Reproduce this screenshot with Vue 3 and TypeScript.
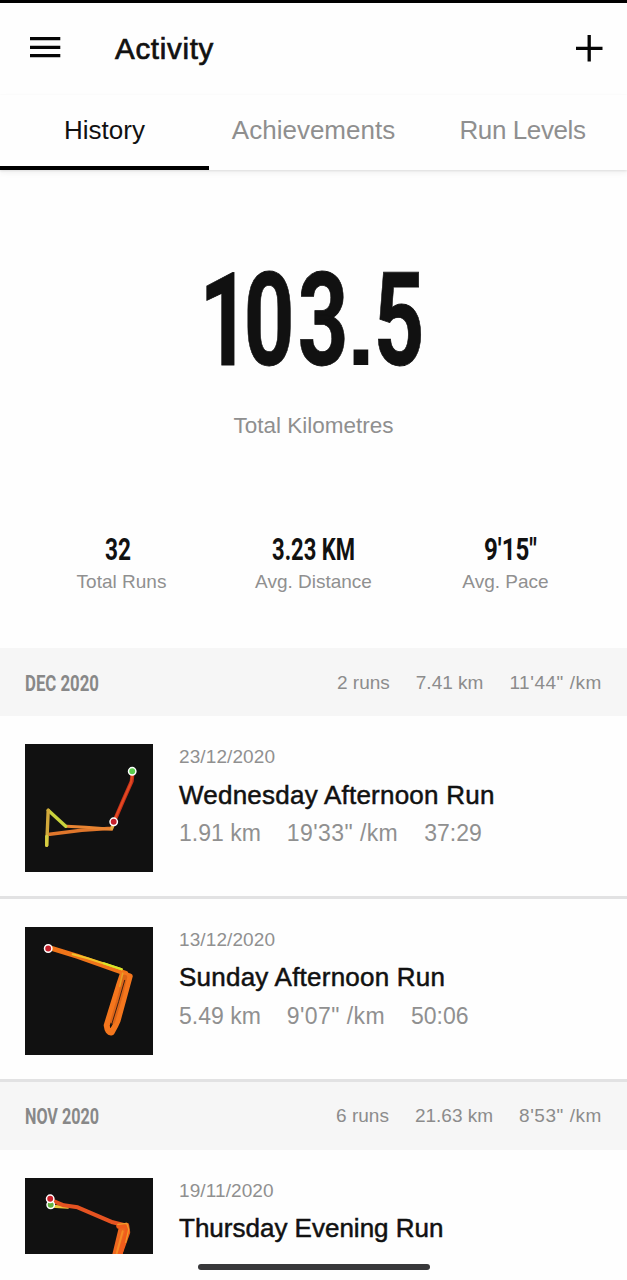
<script setup lang="ts">
interface Heading {
  text: string
  width: number
}
interface Dot {
  x: number
  y: number
  color: string
}
interface Track {
  d: string
  color: string
  width: number
}
interface Run {
  date: string
  title: string
  tight?: boolean
  stats: string[]
  tracks: Track[]
  dots: Dot[]
}
interface Month {
  name: Heading
  summary: string[]
  runs: Run[]
}

const tabs: string[] = ['History', 'Achievements', 'Run Levels']

const totals: { value: Heading; label: string }[] = [
  { value: { text: '32', width: 26 }, label: 'Total Runs' },
  { value: { text: '3.23 KM', width: 83 }, label: 'Avg. Distance' },
  { value: { text: '9\'15"', width: 53 }, label: 'Avg. Pace' },
]

const isPace = (s: string): boolean => s.includes('"')

const months: Month[] = [
  {
    name: { text: 'DEC 2020', width: 75 },
    summary: ['2 runs', '7.41 km', '11\'44" /km'],
    runs: [
      {
        date: '23/12/2020',
        title: 'Wednesday Afternoon Run',
        stats: ['1.91 km', '19\'33" /km', '37:29'],
        tracks: [
          { d: 'M107 27 L106 37 L102 46 L98 55 L89 76', color: '#c5301a', width: 4 },
          { d: 'M107 29 L105 39 L89 75', color: '#e34a22', width: 2 },
          { d: 'M24 90 L56 86 L86 84 L88 78', color: '#df762b', width: 3.4 },
          { d: 'M41 82 L60 83 L86 85', color: '#e88432', width: 3 },
          { d: 'M22.5 66 L40 82', color: '#c9d33d', width: 3.4 },
          { d: 'M22.5 66 L21 101', color: '#d2a93b', width: 3.4 },
          { d: 'M21 92 L21 101', color: '#d5cf42', width: 3.2 },
          { d: 'M86 84 L88 80', color: '#dfaf45', width: 3 },
        ],
        dots: [
          { x: 106.5, y: 27, color: '#5acb4c' },
          { x: 88, y: 77.5, color: '#c41f2b' },
        ],
      },
      {
        date: '13/12/2020',
        title: 'Sunday Afternoon Run',
        stats: ['5.49 km', '9\'07" /km', '50:06'],
        tracks: [
          { d: 'M26 21 L52 29 L100 46', color: '#ef7419', width: 5 },
          { d: 'M47 27 L62 31 L96 42', color: '#efc32a', width: 2.2 },
          { d: 'M78 36 L96 42', color: '#d8e629', width: 2 },
          { d: 'M97 47 L93 59 L81 98 Q82 106 86 105 Q90 98 92 93 L104 49 L97 47', color: '#f4761d', width: 6 },
          { d: 'M99 50 L95 67 L87 94', color: '#dc6518', width: 5 },
          { d: 'M99 53 L93 74 L86 97', color: '#3e2113', width: 1 },
          { d: 'M97 46 L94 59', color: '#e6a426', width: 1.5 },
        ],
        dots: [{ x: 22.5, y: 21.2, color: '#c41f2b' }],
      },
    ],
  },
  {
    name: { text: 'NOV 2020', width: 75 },
    summary: ['6 runs', '21.63 km', '8\'53" /km'],
    runs: [
      {
        date: '19/11/2020',
        title: 'Thursday Evening Run',
        tight: true,
        stats: [],
        tracks: [
          { d: 'M26 28 L42 29', color: '#ecc73b', width: 3 },
          { d: 'M26 22 L38 27 L52 29 L73 38 L87 44 L99 47', color: '#e55321', width: 4 },
          { d: 'M98 50 L91 79', color: '#ed671f', width: 10 },
          { d: 'M93 48 L101 47 L102 54 L93 79', color: '#f15c1b', width: 5 },
          { d: 'M92 46 L101 45 L103 51 L100 64', color: '#ef9e2b', width: 1.2 },
          { d: 'M97 53 L91 75', color: '#f68b25', width: 2 },
        ],
        dots: [
          { x: 25, y: 26.5, color: '#62b33f' },
          { x: 24.5, y: 20.5, color: '#c91f29' },
        ],
      },
    ],
  },
]
</script>

<template>
  <div class="screen">
    <header class="topbar">
      <svg class="menu" width="31" height="21" viewBox="0 0 31 21" aria-label="Menu">
        <path d="M0 1.7H30.3M0 10.3H30.3M0 18.7H30.3" />
      </svg>
      <h1>Activity</h1>
      <svg class="plus" width="27" height="27" viewBox="0 0 27 27" aria-label="Add">
        <path d="M0 13.3H26.5M13.2 0V26.5" />
      </svg>
    </header>

    <nav class="tabs">
      <span v-for="(tab, i) in tabs" :key="tab" class="tab" :class="{ active: i === 0 }">{{ tab }}</span>
    </nav>

    <section class="hero">
      <svg class="total" width="240" height="170" viewBox="0 0 240 170">
        <text transform="scale(0.68 1)" x="8 73 152.5" y="135">103</text>
        <text class="point" x="152.5" y="135">.</text>
        <text transform="scale(0.68 1)" x="264.5" y="135">5</text>
      </svg>
      <p>Total Kilometres</p>
    </section>

    <section class="totals">
      <div v-for="item in totals" :key="item.label" class="cell">
        <svg class="value" :width="item.value.width + 4" height="44">
          <text x="2" y="32" :textLength="item.value.width" lengthAdjust="spacingAndGlyphs">{{ item.value.text }}</text>
        </svg>
        <span class="label">{{ item.label }}</span>
      </div>
    </section>

    <section v-for="month in months" :key="month.name.text" class="month">
      <div class="band">
        <svg class="name" :width="month.name.width" height="30">
          <text x="0" y="23" :textLength="month.name.width - 1" lengthAdjust="spacingAndGlyphs">{{ month.name.text }}</text>
        </svg>
        <div class="summary">
          <span v-for="s in month.summary" :key="s" :class="{ pace: isPace(s) }">{{ s }}</span>
        </div>
      </div>
      <article v-for="run in month.runs" :key="run.date" class="run">
        <svg class="map" width="128" height="128" viewBox="-0.7 -0.3 128 128">
          <path v-for="t in run.tracks" :key="t.d" :d="t.d" :stroke="t.color" :stroke-width="t.width" />
          <circle v-for="p in run.dots" :key="p.y" :cx="p.x" :cy="p.y" :fill="p.color" r="3.7" />
        </svg>
        <div class="info">
          <span class="date">{{ run.date }}</span>
          <span class="title" :class="{ tight: run.tight }">{{ run.title }}</span>
          <span class="stats">
            <span v-for="s in run.stats" :key="s" :class="{ pace: isPace(s) }">{{ s }}</span>
          </span>
        </div>
      </article>
    </section>

    <footer class="home"><i></i></footer>
  </div>
</template>

<style>
body {
  margin: 0;
  background: #fefefe;
}
</style>

<style scoped>
.screen {
  position: relative;
  box-sizing: border-box;
  width: 627px;
  height: 1280px;
  overflow: hidden;
  border-top: 3px solid #000;
  background: #fefefe;
  color: #111;
  font-family: "Liberation Sans", Arial, sans-serif;
}
svg {
  display: block;
  flex: none;
}
.topbar {
  display: flex;
  align-items: center;
  height: 92px;
  padding: 0 24px 0 30px;
}
.menu,
.plus {
  fill: none;
  stroke: #050505;
  stroke-width: 3.3;
}
.menu {
  margin-top: -3px;
}
.plus {
  margin-left: auto;
  margin-top: -1px;
}
h1 {
  margin: 0 0 0 54px;
  font-size: 29.5px;
  font-weight: 400;
  line-height: 40px;
  letter-spacing: 0.7px;
  -webkit-text-stroke: 0.7px #111;
}
.tabs {
  display: grid;
  grid-template-columns: repeat(3, 1fr);
  height: 75px;
  box-shadow: 0 1px 2px #dedede, 0 3px 6px #f2f2f2;
}
.tab {
  box-sizing: border-box;
  border-bottom: 4px solid transparent;
  color: #8f8f8f;
  font-size: 26px;
  line-height: 71px;
  text-align: center;
}
.tab.active {
  border-color: #000;
  color: #111;
}
.tab:last-child {
  letter-spacing: -0.4px;
}
.hero {
  display: flex;
  flex-direction: column;
  align-items: center;
  height: 358px;
  padding-top: 60px;
  box-sizing: border-box;
}
.total text {
  font-family: Roboto, sans-serif;
  font-size: 130px;
  font-weight: 700;
  fill: #111;
  stroke: #111;
  stroke-width: 0.8px;
}
.total .point {
  font-family: "Liberation Sans", Arial, sans-serif;
  font-size: 104px;
  stroke: none;
}
.hero p {
  margin: 11px 0 0;
  color: #8f8f8f;
  font-size: 22.5px;
  line-height: 30px;
}
.totals {
  display: grid;
  grid-template-columns: repeat(3, 192px);
  justify-content: center;
  height: 120px;
  box-sizing: border-box;
}
.cell {
  display: flex;
  flex-direction: column;
  align-items: center;
}
.cell:first-child .value {
  margin-right: 8px;
}
.cell:last-child .value {
  margin-left: 9px;
}
.value text {
  font-family: Roboto, sans-serif;
  font-size: 31.5px;
  font-weight: 700;
  fill: #111;
}
.label {
  margin-top: -4px;
  color: #909090;
  font-size: 19px;
  line-height: 28px;
}
.band {
  display: flex;
  align-items: center;
  justify-content: space-between;
  box-sizing: border-box;
  height: 68px;
  padding: 2px 25px 0;
  background: #f6f6f6;
}
.month + .month .band {
  padding-top: 0;
}
.name text {
  font-family: Roboto, sans-serif;
  font-size: 22.8px;
  font-weight: 700;
  fill: #888;
}
.summary {
  display: flex;
  gap: 26px;
  color: #8c8c8c;
  font-size: 19px;
}
.pace {
  letter-spacing: 0.55px;
}
.run {
  display: flex;
  gap: 26px;
  box-sizing: border-box;
  height: 183px;
  padding: 28px 25px 0;
  border-bottom: 3px solid #e2e2e3;
}
.map {
  background: #111;
  fill: none;
  stroke-linecap: round;
  stroke-linejoin: round;
}
.map circle {
  stroke: #fff;
  stroke-width: 1.5px;
}
.info {
  display: flex;
  flex-direction: column;
  padding-top: 1px;
  white-space: nowrap;
}
.date {
  color: #909090;
  font-size: 19px;
  line-height: 24px;
  letter-spacing: 0.1px;
}
.title {
  font-size: 26px;
  line-height: 52px;
  letter-spacing: 0.23px;
  -webkit-text-stroke: 0.5px #111;
}
.title.tight {
  letter-spacing: 0;
}
.run + .run .title,
.month + .month .title {
  margin-bottom: 2px;
  line-height: 50px;
}
.stats {
  display: flex;
  gap: 26px;
  color: #909090;
  font-size: 23px;
  line-height: 24px;
}
.stats .pace {
  letter-spacing: 0.42px;
}
.home {
  position: absolute;
  inset: auto 0 0;
  height: 26px;
  background: #fefefe;
}
.home i {
  display: block;
  width: 232px;
  height: 6px;
  margin: 10px auto 0;
  border-radius: 3px;
  background: #38383a;
}
</style>
